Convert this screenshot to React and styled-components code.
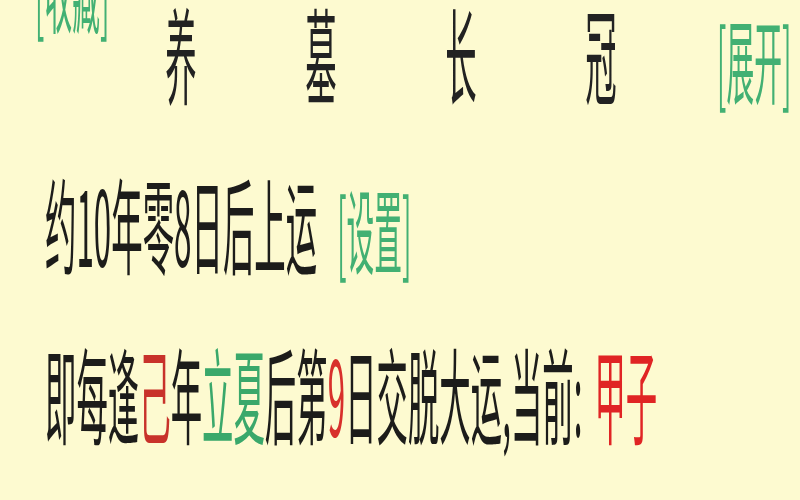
import React from "react";
import styled, { createGlobalStyle } from "styled-components";

const S = 0.302;
const u = (px) => `${(px / S).toFixed(2)}px`;

const Global = createGlobalStyle`
  html, body { margin: 0; padding: 0; background: #fdfad0; overflow: hidden; }
  #root { width: 800px; height: 500px; overflow: hidden; }
`;

const Page = styled.div`
  width: ${u(800)};
  height: 540px;
  margin-top: -33px;
  transform: scaleX(${S});
  transform-origin: 0 0;
  font-family: "Noto Sans CJK SC", "Noto Sans", sans-serif;
  font-size: 104px;
  line-height: 170px;
  color: #1c1c1a;
  background: #fdfad0;
`;

const Row = styled.div`
  display: flex;
  align-items: baseline;
  height: 170px;
  padding-left: ${(p) => u(p.$left)};
  white-space: nowrap;
`;

const Link = styled.span`
  color: #42b073;
  font-size: 92px;
  margin-left: ${(p) => u(p.$ml || 0)};
  margin-top: ${(p) => (p.$up ? `-${p.$up}px` : 0)};
  align-self: ${(p) => (p.$up ? "flex-start" : "baseline")};
  width: ${(p) => (p.$w ? u(p.$w) : "auto")};
`;

const Branch = styled.span`
  width: ${u(140)};
  text-align: center;
  color: #222;
`;

const Red = styled.span`
  color: ${(p) => p.$c || "#cc2e28"};
`;

const Green = styled.span`
  color: #3aa86b;
`;

const Gap = styled.span`
  display: inline-block;
  width: ${(p) => u(p.$w)};
`;

export default function App() {
  return (
    <>
      <Global />
      <Page>
        <Row $left={35}>
          <Link $up={66} $w={76}>[收藏]</Link>
          <Branch>养</Branch>
          <Branch>墓</Branch>
          <Branch>长</Branch>
          <Branch>冠</Branch>
          <Link $ml={46}>[展开]</Link>
        </Row>
        <Row $left={45}>
          <span>约10年零8日后上运</span>
          <Link $ml={20}>[设置]</Link>
        </Row>
        <Row $left={45}>
          <span>
            即每逢<Red $c="#c8322a">己</Red>年<Green>立夏</Green>后第<Red $c="#d8302c">9</Red>日交脱大运,当前:<Gap $w={12} /><Red $c="#e02424">甲子</Red>
          </span>
        </Row>
      </Page>
    </>
  );
}
